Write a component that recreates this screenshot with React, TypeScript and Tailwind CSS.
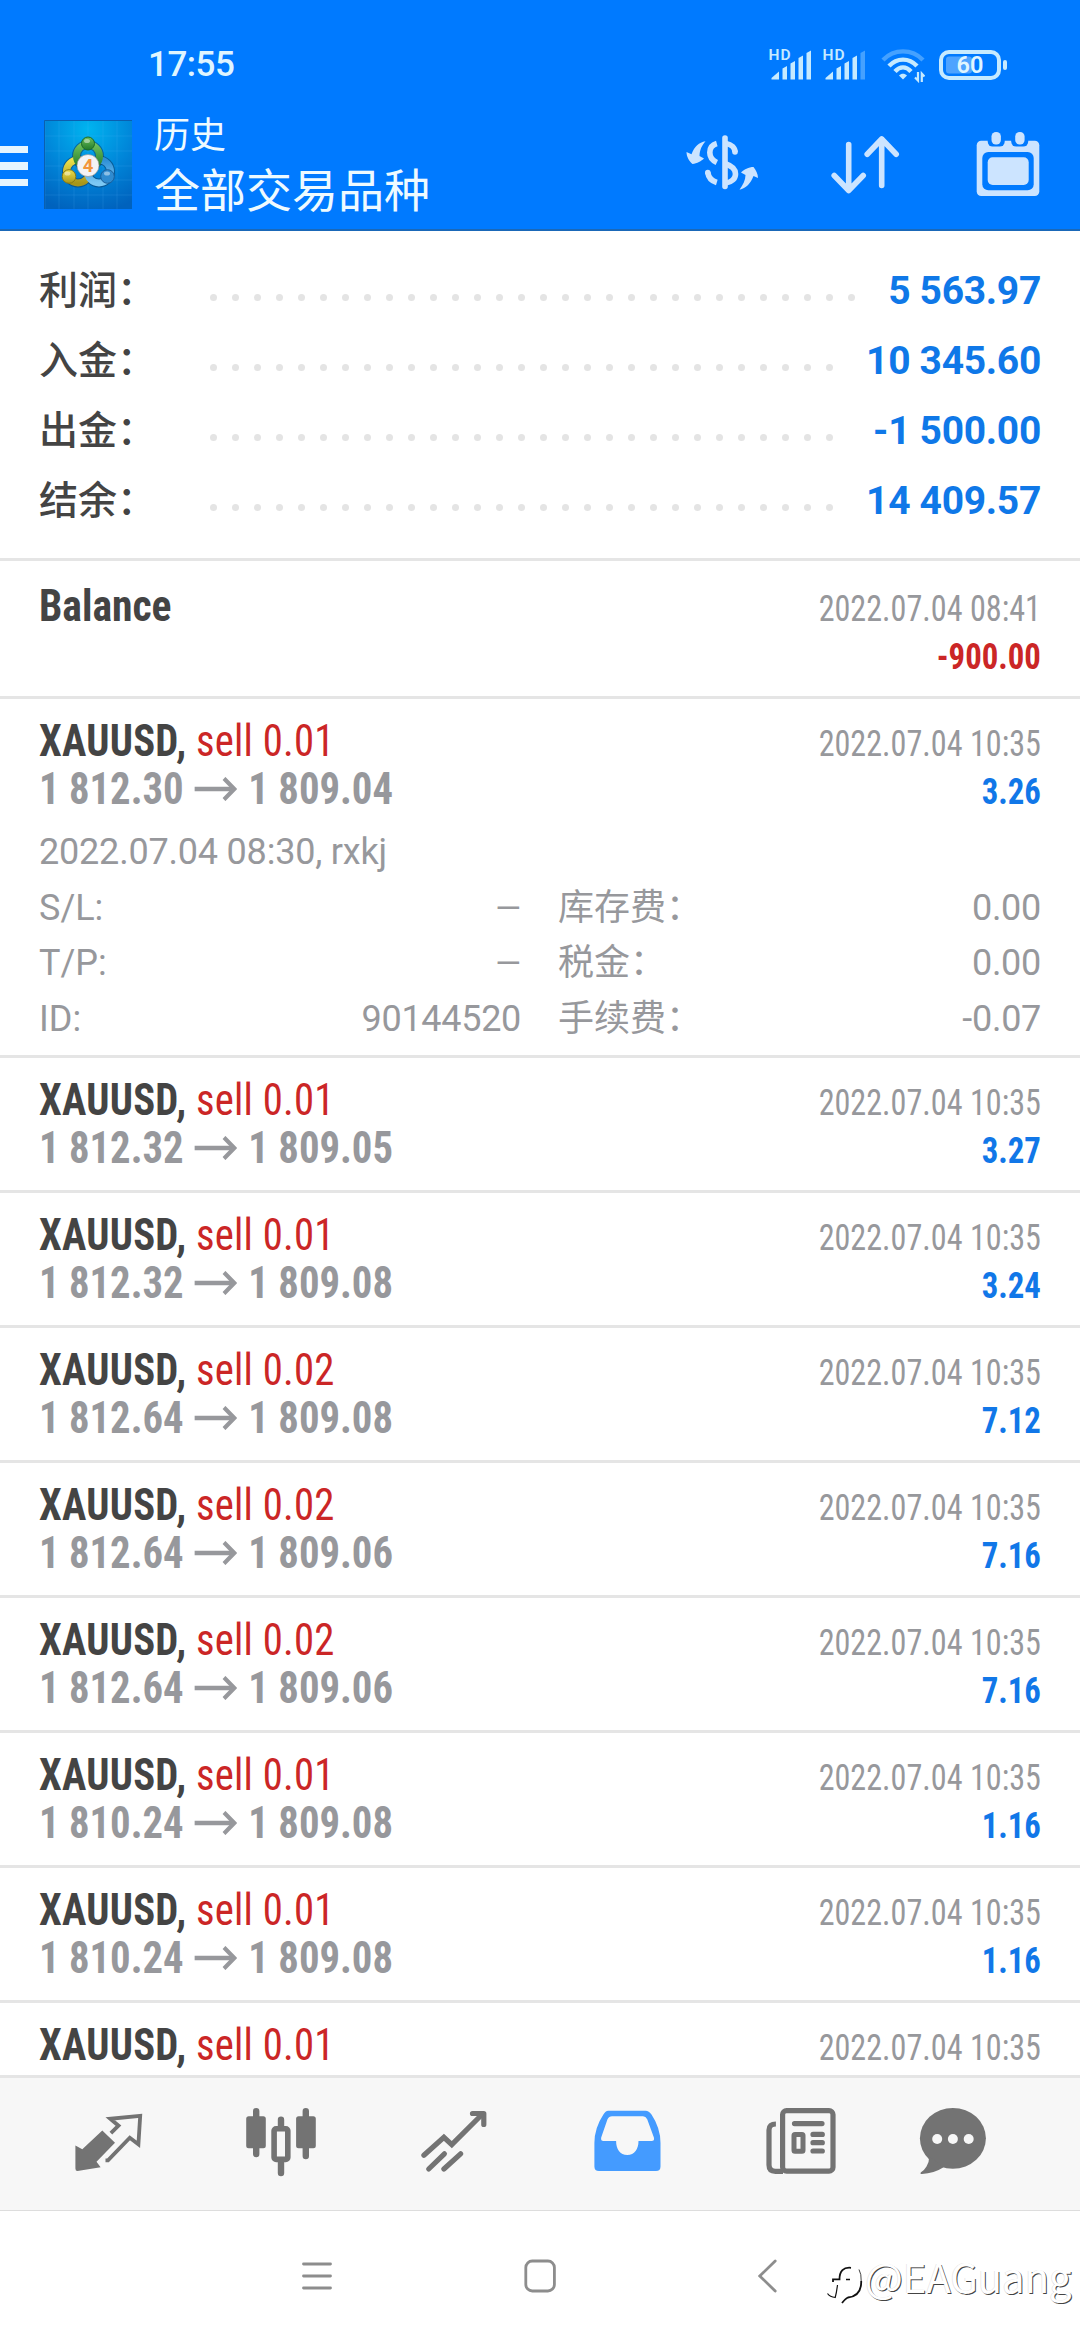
import type { ReactNode } from 'react';

type Deal = {
  volume: string;
  open: string;
  close: string;
  time: string;
  profit: string;
  opened?: boolean;
};

const summary = [
  { label: '利润\uff1a', value: '5 563.97', dots: 30 },
  { label: '入金\uff1a', value: '10 345.60', dots: 29 },
  { label: '出金\uff1a', value: '-1 500.00', dots: 29 },
  { label: '结余\uff1a', value: '14 409.57', dots: 29 },
];

const deals: Deal[] = [
  { volume: '0.01', open: '1 812.30', close: '1 809.04', time: '2022.07.04 10:35', profit: '3.26', opened: true },
  { volume: '0.01', open: '1 812.32', close: '1 809.05', time: '2022.07.04 10:35', profit: '3.27' },
  { volume: '0.01', open: '1 812.32', close: '1 809.08', time: '2022.07.04 10:35', profit: '3.24' },
  { volume: '0.02', open: '1 812.64', close: '1 809.08', time: '2022.07.04 10:35', profit: '7.12' },
  { volume: '0.02', open: '1 812.64', close: '1 809.06', time: '2022.07.04 10:35', profit: '7.16' },
  { volume: '0.02', open: '1 812.64', close: '1 809.06', time: '2022.07.04 10:35', profit: '7.16' },
  { volume: '0.01', open: '1 810.24', close: '1 809.08', time: '2022.07.04 10:35', profit: '1.16' },
  { volume: '0.01', open: '1 810.24', close: '1 809.08', time: '2022.07.04 10:35', profit: '1.16' },
];

function Signal({ weak }: { weak?: boolean }) {
  return (
    <svg className="mb-1 overflow-visible" width="44" height="36" viewBox="-2 -4 44 36" fill="#c6eaff">
      <text x="-1.5" y="11" fontSize="15.5" fontWeight="600" fontFamily="Roboto, sans-serif" letterSpacing="1">HD</text>
      <path d="M1.5 30.5V29L9 22.5V30.5Z" />
      <path d="M12.5 30.5V19.5L17 17V30.5Z" />
      <path d="M20.5 30.5V14.5L25 12V30.5Z" />
      <path d="M28.5 30.5V9L33 6.5V30.5Z" />
      <path d="M36.5 30.5V4L41 1.5V30.5Z" opacity={weak ? 0.35 : 1} />
    </svg>
  );
}

function Wifi() {
  return (
    <svg width="44" height="36" viewBox="0 0 44 36" fill="none" stroke="#c6eaff" strokeWidth="4.4">
      <path d="M2 13C13 1.5 31 1.5 42 13" opacity="0.35" />
      <path d="M8 19C16 10.5 28 10.5 36 19" />
      <path d="M14 24.5C19 19 25 19 30 24.5" />
      <path d="M18 28.5C20.5 26 23.5 26 26 28.5L22 32.5Z" fill="#c6eaff" stroke="none" />
      <path d="M37 25V33.5L34 30.5M40.8 35V26.5L43.5 29.5" strokeWidth="2.2" />
    </svg>
  );
}

function Battery() {
  return (
    <svg width="70" height="32" viewBox="0 0 70 32">
      <rect x="3" y="3" width="58" height="26" rx="8" fill="none" stroke="#c6eaff" strokeWidth="4" />
      <rect x="8" y="7.5" width="26" height="17" rx="3" fill="#4da3ff" />
      <rect x="65" y="11" width="4" height="10" rx="2" fill="#c6eaff" />
      <text x="32" y="24.3" textAnchor="middle" fontSize="23.5" fontWeight="600" fontFamily="Roboto, sans-serif" fill="#dff5ff">60</text>
    </svg>
  );
}

function AppLogo() {
  return (
    <svg width="88" height="89" viewBox="0 0 88 89">
      <defs>
        <radialGradient id="bg" cx="0.5" cy="0.1" r="0.95">
          <stop offset="0" stopColor="#00b4f0" />
          <stop offset="0.55" stopColor="#0084d8" />
          <stop offset="1" stopColor="#0062bd" />
        </radialGradient>
        <linearGradient id="green" x1="0" y1="0" x2="0" y2="1">
          <stop offset="0" stopColor="#6fc05c" />
          <stop offset="1" stopColor="#1f7a2a" />
        </linearGradient>
        <linearGradient id="yellow" x1="0" y1="0" x2="0" y2="1">
          <stop offset="0" stopColor="#ece04c" />
          <stop offset="1" stopColor="#a8961a" />
        </linearGradient>
        <linearGradient id="sky" x1="0" y1="0" x2="0" y2="1">
          <stop offset="0" stopColor="#2e8fd6" />
          <stop offset="1" stopColor="#7cc8f4" />
        </linearGradient>
      </defs>
      <rect width="88" height="89" fill="url(#bg)" />
      <path d="M1 0V89M15 0V89M30 0V89M44 0V89M59 0V89M73 0V89M0 16H88M0 31H88M0 46H88M0 60H88M0 75H88" stroke="#5cc4ff" strokeOpacity="0.15" />
      <path d="M0.5 89V0.5H88" fill="none" stroke="#0a5fb0" />
      <g fill="none" strokeWidth="9" stroke="#0b3f6b" strokeOpacity="0.6">
        <circle cx="44" cy="36" r="11.5" />
        <circle cx="34" cy="51.5" r="11.5" />
        <circle cx="55" cy="51.5" r="11.5" />
      </g>
      <g fill="none" strokeWidth="7">
        <circle cx="34" cy="51.5" r="11.5" stroke="url(#yellow)" />
        <circle cx="55" cy="51.5" r="11.5" stroke="url(#sky)" />
        <circle cx="44" cy="36" r="11.5" stroke="url(#green)" />
      </g>
      <circle cx="44" cy="23.5" r="6.5" fill="url(#green)" stroke="#1c6b25" strokeWidth="1" />
      <circle cx="25" cy="56.5" r="6.8" fill="url(#yellow)" stroke="#8a7a12" strokeWidth="1" />
      <circle cx="63.5" cy="56.5" r="6.8" fill="#2f8bd0" stroke="#1c5f99" strokeWidth="1" />
      <ellipse cx="43" cy="21" rx="3" ry="2" fill="#fff" opacity="0.45" />
      <ellipse cx="23.5" cy="53.5" rx="3" ry="2" fill="#fff" opacity="0.45" />
      <ellipse cx="63" cy="53.5" rx="3" ry="2" fill="#fff" opacity="0.45" />
      <circle cx="44" cy="45.5" r="11" fill="#f3f3f5" stroke="#8b8b8b" strokeWidth="0.6" />
      <text x="44" y="52" textAnchor="middle" fontSize="18.5" fontWeight="700" fontFamily="Roboto, sans-serif" fill="#f2963c">4</text>
    </svg>
  );
}

function CurrencyIcon() {
  return (
    <svg width="100" height="80" viewBox="0 0 100 80" fill="none" stroke="#cce4ff" strokeWidth="5.6">
      <path d="M55 14V62.5" strokeLinecap="round" />
      <path d="M46.8 19.5C41.5 21 39.8 25 39.8 28.5C39.8 32.5 41.5 36 46.8 38.5" />
      <path d="M37.8 48.5C38.5 53.5 42 57 46.8 58.5" />
      <circle cx="37.8" cy="48.5" r="2.8" fill="#cce4ff" stroke="none" />
      <path d="M56 19.5C61.5 20.5 65 24 65 28" />
      <circle cx="65" cy="28" r="2.8" fill="#cce4ff" stroke="none" />
      <path d="M56 40C62 42 65.5 45.5 65.5 50C65.5 54.5 62 58 56 59" />
      <g fill="#cce4ff" stroke="none">
        <path d="M16.5 28L21.5 30.3C24.5 22.5 29 18.5 35.5 17.3C31.5 22 29.8 26 29.5 32L34 34.5C31.5 37 27 39.7 22.5 40C19.5 37.5 16.5 33 16.5 28Z" />
        <path d="M88 54L83.5 52C80.5 59.5 76 64.5 69.5 65.7C73 61 75.5 56 75.5 51L71 48.5C73.5 45.5 79 43 83.5 43C86 46 88 50 88 54Z" />
      </g>
    </svg>
  );
}

function SortIcon() {
  return (
    <svg width="72" height="68" viewBox="0 0 72 68" fill="none" stroke="#cce4ff" strokeWidth="5.6" strokeLinecap="round" strokeLinejoin="round">
      <path d="M19.7 14.5V60.5M5.2 45.5L19.7 60.5L34.2 45.5" />
      <path d="M52.7 55.5V9M38.2 24.2L52.7 9L67.2 24.2" />
    </svg>
  );
}

function CalendarIcon() {
  return (
    <svg width="68" height="68" viewBox="0 0 68 68" fill="#cce4ff">
      <rect x="2.7" y="10.7" width="62.6" height="55.3" rx="4.5" />
      <rect x="13.7" y="4" width="17" height="12.6" rx="5" fill="#007aff" />
      <rect x="37.2" y="4" width="17" height="12.6" rx="5" fill="#007aff" />
      <rect x="17.5" y="2" width="9.4" height="12.6" rx="4.5" />
      <rect x="41.2" y="2" width="9.4" height="12.6" rx="4.5" />
      <rect x="8.3" y="22" width="51.4" height="38.3" rx="6" fill="#007aff" />
      <rect x="13.7" y="27.3" width="41" height="27.7" rx="5" />
    </svg>
  );
}

function TabIcon({ children }: { children: ReactNode }) {
  return (
    <svg width="72" height="72" viewBox="0 0 72 72" fill="#737373">
      {children}
    </svg>
  );
}

function Detail({ label, value }: { label: string; value: string }) {
  return (
    <div className="flex justify-between">
      <span>{label}</span>
      <span className={value === '—' ? 'text-[33px]' : 'tracking-[-0.3px]'}>{value}</span>
    </div>
  );
}

function DealCard({ deal }: { deal: Deal }) {
  return (
    <div className="border-b-[3px] border-[#e5e5e5] px-[39px] pt-[18px] pb-[15px]">
      <div className="flex justify-between font-['Roboto_Condensed']">
        <div className="origin-left scale-x-[0.925] text-[44px] leading-[48px]">
          <p className="tracking-[0.25px]">
            <span className="font-bold text-[#444444]">XAUUSD, </span>
            <span className="text-[#cb2626]">sell {deal.volume}</span>
          </p>
          <p className="flex items-center font-bold text-[#97989c]">
            {deal.open}
            <svg className="mr-[12px] ml-[12px]" width="46" height="24" viewBox="0 0 46 24" fill="none" stroke="#97989c">
              <path d="M0 12H42" strokeWidth="4.4" />
              <path d="M32 1.5L43 12L32 22.5" strokeWidth="4.4" />
            </svg>
            {deal.close}
          </p>
        </div>
        <div className="pt-[3px] text-right text-[36px] leading-[48px]">
          <p className="origin-right scale-x-[0.893] text-[#97989c]">{deal.time}</p>
          <p className="origin-right scale-x-[0.91] font-bold text-[#1177e8]">{deal.profit}</p>
        </div>
      </div>

      {deal.opened && (
        <div className="-mb-[7px] pt-[9px] text-[36px] leading-[55.5px] text-[#97989c]">
          <p className="tracking-[-0.2px]">2022.07.04 08:30, rxkj</p>
          <div className="grid grid-cols-[482px_483px] gap-x-[37px]">
            <Detail label="S/L:" value="—" />
            <Detail label={'库存费\uff1a'} value="0.00" />
            <Detail label="T/P:" value="—" />
            <Detail label={'税金\uff1a'} value="0.00" />
            <Detail label="ID:" value="90144520" />
            <Detail label={'手续费\uff1a'} value="-0.07" />
          </div>
        </div>
      )}
    </div>
  );
}

export default function App() {
  return (
    <div className="flex h-[2340px] w-[1080px] flex-col overflow-hidden bg-white font-[Roboto,'Noto_Sans_CJK_SC',sans-serif]">
      <header className="h-[231px] shrink-0 border-b-2 border-[#1a68b8] bg-[#007aff]">
        <div className="flex h-[87px] items-center pt-[43px] pr-[72px] pl-[148px]">
          <span className="text-[35px] leading-[44px] font-medium tracking-[-0.5px] text-[#dff5ff]">17:55</span>
          <div className="ml-auto flex items-center">
            <Signal />
            <div className="w-[10px]" />
            <Signal weak />
            <div className="w-[15px]" />
            <Wifi />
            <div className="w-[13px]" />
            <Battery />
          </div>
        </div>

        <div className="flex h-[142px] items-center pt-3 pr-[38px]">
          <div className="mt-1 flex w-[28px] flex-col gap-[9px]">
            <div className="h-[7.5px] bg-[#e6f5ff]" />
            <div className="h-[7.5px] bg-[#e6f5ff]" />
            <div className="h-[7.5px] bg-[#e6f5ff]" />
          </div>
          <div className="ml-4">
            <AppLogo />
          </div>
          <div className="mb-[3px] ml-[22px] font-['Noto_Sans_CJK_SC'] font-normal text-[#eefaff]">
            <p className="text-[36px] leading-[48px]">历史</p>
            <p className="text-[46px] leading-[62px]">全部交易品种</p>
          </div>
          <div className="ml-auto flex items-center">
            <CurrencyIcon />
            <div className="w-[59px]" />
            <SortIcon />
            <div className="w-[73px]" />
            <CalendarIcon />
          </div>
        </div>
      </header>

      <main className="h-[1844px] shrink-0 overflow-hidden">
        <section className="h-[330px] border-b-[3px] border-[#e5e5e5] px-[39px] pt-[25px]">
          {summary.map((row) => (
            <div key={row.label} className="flex items-baseline text-[39px] leading-[70px]">
              <span className="w-[171px] font-medium text-[#444444]">{row.label}</span>
              <span className="flex gap-[15px] self-start pt-[38px]">
                {Array.from({ length: row.dots }, (_, i) => (
                  <span key={i} className="size-[7px] rounded-full bg-[#e4e4e4]" />
                ))}
              </span>
              <span className="ml-auto font-bold tracking-[-0.3px] text-[#0f78e8]">{row.value}</span>
            </div>
          ))}
        </section>

        <div className="flex justify-between border-b-[3px] border-[#e5e5e5] px-[39px] pt-[21px] pb-[15px] font-['Roboto_Condensed']">
          <p className="origin-left scale-x-[0.945] text-[44px] leading-[48px] font-bold text-[#444444]">Balance</p>
          <div className="pt-[3px] text-right text-[36px] leading-[48px]">
            <p className="origin-right scale-x-[0.893] text-[#97989c]">2022.07.04 08:41</p>
            <p className="origin-right scale-x-[0.91] font-bold text-[#cb2626]">-900.00</p>
          </div>
        </div>

        {deals.map((deal, i) => (
          <DealCard key={i} deal={deal} />
        ))}

        {/* next deal, only its first line is above the tab bar */}
        <div className="flex justify-between px-[39px] pt-[18px] font-['Roboto_Condensed']">
          <p className="origin-left scale-x-[0.925] text-[44px] leading-[48px] tracking-[0.25px]">
            <span className="font-bold text-[#444444]">XAUUSD, </span>
            <span className="text-[#cb2626]">sell 0.01</span>
          </p>
          <p className="origin-right scale-x-[0.893] pt-[3px] text-[36px] leading-[48px] text-[#97989c]">2022.07.04 10:35</p>
        </div>
      </main>

      <nav className="flex h-[136px] shrink-0 items-center border-t-[3px] border-b border-t-[#e5e5e5] border-b-[#dddddd] bg-[#f7f7f7] pb-1 pl-[72px]">
        <TabIcon>
          <path d="M3.4 39.5L10.3 43.3L30.3 24.5L43 36.8L24.5 55.8L28.6 61.3L5.5 65Q3.4 65 3.4 62.5Z" strokeLinejoin="round" />
          <path d="M38.9 27.2L46.5 19.7L38.2 12.8L68.2 9.8L66.4 38.3L57.8 31.8L36 54.3L33.5 54.3" fill="none" stroke="#737373" strokeWidth="3.8" />
        </TabIcon>
        <div className="w-[101px]" />
        <TabIcon>
          <path d="M11.2 5.3V48M60.8 5.3V50M36 13.7V24M36 54V67" stroke="#737373" strokeWidth="6.4" strokeLinecap="round" />
          <rect x="1.2" y="10.3" width="19.6" height="32" rx="2.5" />
          <rect x="51.1" y="10.3" width="19.7" height="32" rx="2.5" />
          <rect x="29.1" y="22.8" width="13.7" height="30.6" rx="2" fill="#f7f7f7" stroke="#737373" strokeWidth="5.6" />
        </TabIcon>
        <div className="w-[101px]" />
        <TabIcon>
          <g fill="none" stroke="#737373" strokeWidth="5.2" strokeLinecap="round">
            <path d="M5.9 49.3L25.9 31.3L33.8 38.7L64 8.5" strokeLinejoin="miter" />
            <path d="M54.5 7.5H65.8V18.5" strokeLinejoin="round" />
            <path d="M10.7 63L26.4 47.8M25.9 63L42.6 47.8" />
          </g>
        </TabIcon>
        <div className="w-[101px]" />
        <TabIcon>
          <path
            fill="#449bff"
            fillRule="evenodd"
            d="M17.2 4.7H54.5Q58 4.7 60.5 8.5Q69.5 22 69.5 37V60.5Q69.5 65 65 65H8Q3.4 65 3.4 60.5V37Q3.4 22 12.4 8.5Q14.5 4.7 17.2 4.7ZM21 10.3Q17.9 10.3 16.5 13.3L10.2 31.5Q9.5 35 12.5 35H25.1C25.1 43 29 49 36.3 49C43.5 49 47.5 43 47.5 35H60.5Q63.8 35 62.9 31.5L56.2 13.3Q54.7 10.3 52 10.3Z"
          />
        </TabIcon>
        <div className="w-[102px]" />
        <TabIcon>
          <g fill="none" stroke="#737373" strokeWidth="5.2">
            <rect x="17.6" y="4.6" width="50.4" height="60.6" rx="4" />
            <path d="M10.9 18Q4 18 4 24V59Q4 65.3 10.5 65.3H18" />
            <path d="M29.5 17.6H57M48 28.4H57.3M48 36.7H57.3M48 45H57.3" strokeLinecap="round" />
            <rect x="29" y="28.4" width="9" height="16.8" rx="1" strokeWidth="5" />
          </g>
        </TabIcon>
        <div className="w-[80px]" />
        <TabIcon>
          <ellipse cx="35.9" cy="32.3" rx="33" ry="30.4" />
          <path d="M8 47Q15 52 9.5 60.5Q7.5 64 4 66.2Q2.5 68 5 68Q17 67.5 26.6 61.3Z" />
          <circle cx="20.2" cy="33" r="5" fill="#f7f7f7" />
          <circle cx="35.9" cy="33" r="5" fill="#f7f7f7" />
          <circle cx="51.7" cy="33" r="5" fill="#f7f7f7" />
        </TabIcon>
      </nav>

      <footer className="flex h-[129px] shrink-0 items-center pl-[302px]">
        <svg width="30" height="28" viewBox="0 0 30 28" stroke="#8d8d8d" strokeWidth="2.8" strokeLinecap="round">
          <path d="M1.5 2H28.5M1.5 14H28.5M1.5 26H28.5" />
        </svg>
        <svg className="ml-[192px]" width="32" height="34" viewBox="0 0 32 34" fill="none" stroke="#8d8d8d" strokeWidth="2.8">
          <rect x="1.8" y="2" width="28.6" height="30" rx="6.5" />
        </svg>
        <svg className="ml-[202px]" width="20" height="34" viewBox="0 0 20 34" fill="none" stroke="#8d8d8d" strokeWidth="2.8" strokeLinecap="round">
          <path d="M17.2 2L1.8 17L17.2 32" />
        </svg>
        <div className="ml-[49px] flex items-center">
          <svg className="mt-[19px]" width="38" height="38" viewBox="0 0 38 38" fill="none" stroke="#111111">
            <path d="M32 3.5Q34.5 8 34.2 15" strokeWidth="0.8" />
            <path d="M34.2 15C34.5 25 30 30.5 21 31.5Q18.5 32.5 15 37" strokeWidth="1.8" />
            <path d="M24 1.8C16.5 1 12.5 5 12.5 13.3H6V16" strokeWidth="1.8" />
            <path d="M19 13.5H23" strokeWidth="1.5" />
            <path d="M10.5 19Q9.5 27 8.2 31.5Q3 31 0.5 27.5" strokeWidth="1.2" />
          </svg>
          <span className="font-['Noto_Sans_CJK_SC'] text-[40px] leading-[48px] text-white [text-shadow:1px_1px_0_#444444,-0.5px_-0.5px_0_#dddddd]">@EAGuang</span>
        </div>
      </footer>
    </div>
  );
}
